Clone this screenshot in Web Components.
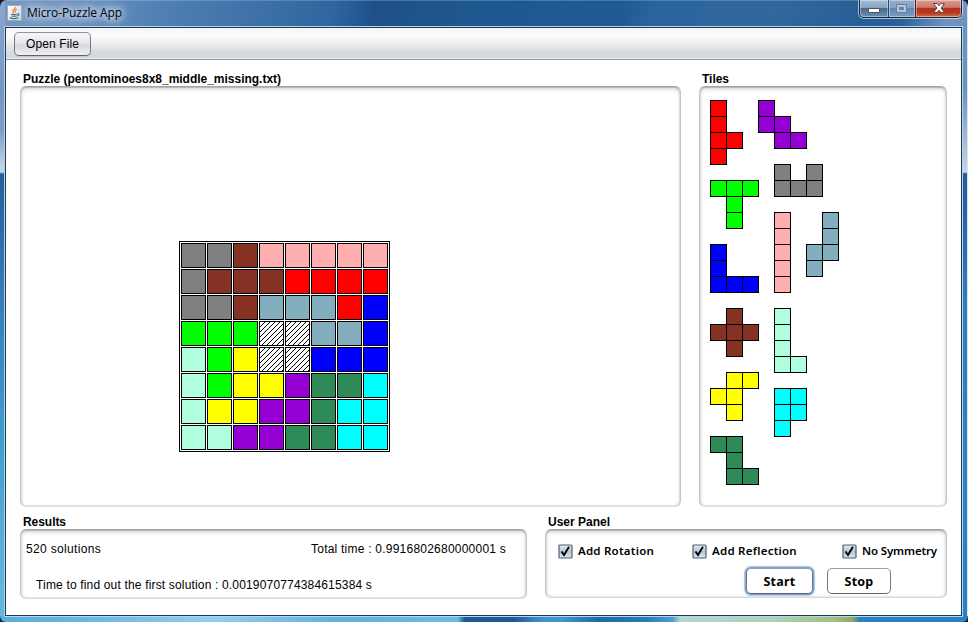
<!DOCTYPE html>
<html lang="en"><head><meta charset="utf-8"><title>Micro-Puzzle App</title>
<style>
html,body{margin:0;height:622px;overflow:hidden;background:#122030}
body{font:12px "Liberation Sans",Arial,sans-serif;color:#000}
.work{display:grid;grid-template-columns:661px 248px;column-gap:18px;padding:10px 0 0 14px;height:453px;box-sizing:border-box}
.lower{display:grid;grid-template-columns:507px 402px;column-gap:18px;padding-left:14px}
.center{display:flex;padding:154px 0 0 158px}
.res{display:flex;flex-direction:column;gap:20px;padding:11px 20px 0 5px}
.res div{display:flex;justify-content:space-between;height:16px;line-height:16px}
.res div+div{padding-left:10px}
.checks{display:grid;grid-template-columns:134px 150px auto;padding:13px 9px 0 12px}
.btns{display:flex;gap:14px;justify-content:flex-end;padding:9px 55px 0 0}
</style></head><body>
<app-window>
  <tool-bar><push-button kind="tool"><fit-text w="53">Open File</fit-text></push-button></tool-bar>
  <div class="work">
    <titled-panel style="--h:421px"><fit-text slot="title" w="258">Puzzle (pentominoes8x8_middle_missing.txt)</fit-text>
      <div class="center"><puzzle-board></puzzle-board></div></titled-panel>
    <titled-panel style="--h:421px"><fit-text slot="title" w="27">Tiles</fit-text><tile-canvas></tile-canvas></titled-panel>
  </div>
  <div class="lower">
    <titled-panel style="--h:70px"><fit-text slot="title" w="43">Results</fit-text>
      <div class="res"><div><fit-text w="75">520 solutions</fit-text><fit-text w="195">Total time : 0.9916802680000001 s</fit-text></div>
      <div><fit-text w="336">Time to find out the first solution : 0.0019070774384615384 s</fit-text></div></div></titled-panel>
    <titled-panel style="--h:69px"><fit-text slot="title" w="62">User Panel</fit-text>
      <div class="checks"><check-box><fit-text w="76">Add Rotation</fit-text></check-box><check-box><fit-text w="85">Add Reflection</fit-text></check-box><check-box><fit-text w="75">No Symmetry</fit-text></check-box></div>
      <div class="btns"><push-button kind="focus"><fit-text w="32">Start</fit-text></push-button><push-button kind="plain"><fit-text w="29">Stop</fit-text></push-button></div></titled-panel>
  </div>
</app-window>
<script>
function define(name, html, setup){
  customElements.define(name, class extends HTMLElement{
    connectedCallback(){
      if(this.shadowRoot) return;
      const t=document.createElement('template'); t.innerHTML=html;
      this.attachShadow({mode:'open'}).append(t.content.cloneNode(true));
      if(setup) setup(this,this.shadowRoot);
    }
  });
}

define('app-window',`<style>
:host{display:grid;position:relative;grid-template-rows:26px 1fr;box-sizing:border-box;width:968px;height:622px;padding:0 6px 5px 4px;border-radius:7px 7px 6px 6px;overflow:hidden;
background:
 linear-gradient(90deg,#56aede,#6cb9e4 10%,#92cdf3 22%,#60b2df 35%,#6bbce6 47.3%,#205796 48%,#205797 53%,#3c94cf 56%,#3e97cf 58%,#196aaa 62%,#2980be 67%,#4b9fd3 69.5%,#b3d7d0 70.3%,#add2b5 80%,#a0c17f 86%,#99a968 88%,#2a80c1 88.8%,#2a80c1) 0 100%/100% 6px no-repeat,
 linear-gradient(#8ba8cc,#7397c3 90px,#7d9dc5 130px,#bed0e2 165px,#c8d7e6 172px,#235f9b 174px,#357db9 300px,#3fa0d0 450px,#65b6df 600px) 0 0/5px 100% no-repeat,
 linear-gradient(90deg,transparent 4px,#d0e6f8 4px) 100% 0/5px 100% no-repeat,
 linear-gradient(#7093bf,#7093bd 90px,#c0d1e3 168px,#c8d7e6 172px,#205d9b 174px,#347ebc 310px,#2d83c4 500px,#2a80c1) 100% 0/6px 100% no-repeat,
 linear-gradient(100deg,#7797bf 0,#6e91bd 7%,#5080b4 15%,#2f669f 31%,#2a619c 32%,#1e5089 35%,#1f5890 45%,#205b96 58%,#2a659e 61%,#32679d 72%,#245d97 82%,#2c629a 84%,#6e92bd 88%,#7496c0);}
.bar{display:flex;align-items:flex-start;justify-content:space-between;box-shadow:inset 0 1px #ffffff30}
.name{display:flex;align-items:center;height:24px;gap:5px;padding-left:3px;font:12px "Open Sans","Noto Sans",sans-serif;text-shadow:0 0 6px #dce8f5,0 0 8px #dce8f5,0 0 12px #c9daed,0 0 14px #c9daed}
.name svg{margin-top:2px}
.ctl{display:flex;width:103px;height:18px;box-sizing:border-box;border:1px solid #17283e;border-top:0;border-radius:0 0 5px 5px;box-shadow:0 0 0 1px #ffffff90;overflow:visible}
.ctl span{display:flex;align-items:center;justify-content:center;box-sizing:border-box;height:17px;box-shadow:inset 0 0 0 1px #ffffff60}
.a{width:28px;background:linear-gradient(#a7bdd4,#87a2c0 45%,#49698f 50%,#6c8fb6);border-radius:0 0 0 4px}
.b{width:27px;background:linear-gradient(#91adcd,#83a2c6 45%,#6387b2 50%,#7b9cc4);border-left:1px solid #2b4668}
.c{width:46px;background:linear-gradient(#dc9e94,#cb7769 43%,#b6301d 50%,#b9371e 75%,#d1704e);border-left:1px solid #501e20;border-radius:0 0 4px 0}
.client{border:1px solid #1b3a59;box-shadow:0 0 0 1px #b9d3e7;background:#fff;margin:1px 0 1px 1px;overflow:hidden}
</style>
<div class="bar"><div class="name"><svg width="15" height="16" viewBox="0 0 15 16"><defs><linearGradient id="g" x2="1" y2="1"><stop stop-color="#fff"/><stop offset="1" stop-color="#cfd5d9"/></linearGradient></defs><rect x=".5" y=".5" width="14" height="15" fill="url(#g)" stroke="#9caabb"/><g fill="none" stroke="#ee7d25" stroke-width="1.2"><path d="M8.5 2C9 4 5 4.600 6 6.500Q7 7.500 6.500 8.500M10 4Q7 5.500 8.500 7.500"/></g><g fill="none" stroke="#3d6d94" stroke-width="1.100"><path d="M4 9.200Q7 10 10 9.200M4.500 11Q7 11.600 9.500 11M2.500 12.800Q7 14.500 11.500 12.800M10.500 8.600Q13 8.500 11.500 10.300L10 11"/></g></svg><fit-text w="95">Micro-Puzzle App</fit-text></div>
<div class="ctl"><span class="a"><svg width="14" height="17"><rect x="1.500" y="8.500" width="11" height="4" rx=".5" fill="#fff" stroke="#4a5361"/></svg></span><span class="b"><svg width="12" height="17"><path d="M.5 4.500h10v8H.5zM3.500 7.500h4v2h-4z" fill="#b2c5da" fill-rule="evenodd" stroke="#6580a1"/></svg></span><span class="c"><svg width="14" height="17"><path d="M1.500 3.500h3.500L7 5.800 9 3.500h3.500L9 8l3.500 4.500H9L7 10.200 5 12.500H1.500L5 8z" fill="#fff" stroke="#57414c"/></svg></span></div></div>
<div class="client"><slot></slot></div>`);

define('tool-bar',`<style>:host{display:flex;box-sizing:border-box;height:32px;padding:4px 0 0 8px;border-bottom:1px solid #92959c;box-shadow:inset 0 -1px #eceef1;background:linear-gradient(#f4f5f7,#fcfcfc 8px,#e9eaed 17px,#d5d8de 25px,#d5d8de)}</style><slot></slot>`);

define('titled-panel',`<style>
:host{display:block;min-width:0}
.t{height:16px;line-height:18px;padding-left:3px;font-weight:bold}
.box{box-sizing:border-box;height:var(--h);border:1px solid #c5c6c6;border-top-color:#a3a5a5;border-bottom-color:#dadada;border-radius:6px;box-shadow:inset 0 1px 1px #b4b4b4,inset 0 2px 4px #d4d4d4,inset 0 0 2px #bbb;background:#fff;overflow:hidden}
</style><div class="t"><slot name="title"></slot></div><div class="box"><slot></slot></div>`);

define('push-button',`<style>
:host{display:flex;box-sizing:border-box;align-items:center;justify-content:center;height:26px;width:64px;border:1px solid #73777f;border-top-color:#989ea7;border-bottom-color:#5e6268;border-radius:5px;background:#fff;font:bold 12.5px "Noto Sans",sans-serif}
:host([kind=tool]){width:77px;height:24px;font:12px "Liberation Sans",sans-serif;background:linear-gradient(#f7f7f8,#e5e6ea 48%,#d5d8df 54%,#e4e6eb 80%,#f0f1f4);border-color:#8d929c #767a82 #5f646c;box-shadow:0 1px #c5c8ce}
:host([kind=focus]){width:67px;box-shadow:0 0 0 1px #7ba6d5,0 0 1px 2px #a8c6e6}
</style><slot></slot>`);

define('check-box',`<style>:host{display:flex;align-items:center;gap:5px;height:16px;font:600 11.5px "Noto Sans",sans-serif}svg{flex:none}slot{display:block;margin-top:-2px}</style>
<svg width="15" height="15" viewBox="0 0 15 15"><defs><linearGradient id="c" x2="0" y2="1"><stop stop-color="#e6edf3"/><stop offset=".5" stop-color="#b5c5d4"/><stop offset="1" stop-color="#d9e8f4"/></linearGradient></defs><rect x="1" y="1" width="13" height="13" rx="1" fill="url(#c)" stroke="#4c6075" stroke-width="1.200"/><path d="M3.500 7.500l2.500 3.500L11 2.800" fill="none" stroke="#000" stroke-width="1.900"/></svg><slot></slot>`);

const COLORS={g:'#808080',b:'#853224',p:'#ffafaf',r:'#ff0000',s:'#83aebe',B:'#0000ff',G:'#00ff00',m:'#afffdf',y:'#ffff00',v:'#9400d3',d:'#2e8b57',c:'#00ffff'};

// Blocked cell: one-pixel rising diagonals.
let hatch='';
for(let y=0;y<23;y++) for(let x=0;x<23;x++) if((x+y)%5===4) hatch+='M'+x+' '+y+'h1v1h-1z';

define('puzzle-board',`<style>:host{display:grid;grid-template-columns:repeat(8,25px);grid-auto-rows:25px;gap:1px;border:1px solid #000;padding:1px}
i{box-sizing:border-box;border:1px solid #000;display:block}svg{display:block}</style>`,(el,root)=>{
  for(const k of 'ggbppppp'+'gbbbrrrr'+'ggbsssrB'+'GGG##ssB'+'mGy##BBB'+'mGyyvddc'+'myyvvdcc'+'mmvvddcc'){
    const c=document.createElement('i');
    if(k==='#') c.innerHTML='<svg width="23" height="23" shape-rendering="crispEdges"><path d="'+hatch+'"/></svg>';
    else c.style.background=COLORS[k];
    root.append(c);
  }
});

define('tile-piece',`<style>:host{display:block;position:absolute}svg{display:block}</style>`,(el,root)=>{
  const rows=el.getAttribute('shape').split('/'), fill=COLORS[el.getAttribute('color')];
  const w=Math.max(...rows.map(r=>r.length))*16+1, h=rows.length*16+1;
  let s='';
  rows.forEach((r,y)=>[...r].forEach((k,x)=>{ if(k==='x') s+='<rect x="'+(x*16+.5)+'" y="'+(y*16+.5)+'" width="16" height="16" fill="'+fill+'" stroke="#000"/>'; }));
  root.innerHTML+='<svg width="'+w+'" height="'+h+'">'+s+'</svg>';
});

define('tile-canvas',`<style>:host{display:block;position:relative;height:100%}</style>`,(el,root)=>{
  for(const [x,y,color,shape] of [[10,13,'r','x/x/xx/x'],[58,13,'v','x/xx/.xx'],[74,77,'g','x.x/xxx'],[10,93,'G','xxx/.x/.x'],[74,125,'p','x/x/x/x/x'],[106,125,'s','.x/.x/xx/x'],[10,157,'B','x/x/xxx'],[10,221,'b','.x/xxx/.x'],[74,221,'m','x/x/x/xx'],[10,285,'y','.xx/xx/.x'],[74,301,'c','xx/xx/x'],[10,349,'d','xx/.x/.xx']]){
    const p=document.createElement('tile-piece');
    p.setAttribute('color',color); p.setAttribute('shape',shape);
    p.style.left=x+'px'; p.style.top=y+'px';
    root.append(p);
  }
});

// Registered last: it measures text in the fonts that the elements above set.
define('fit-text',`<style>:host{display:inline-block;white-space:pre;flex:none}</style><slot></slot>`,el=>{
  const n=el.textContent.length, w=+el.getAttribute('w');
  const range=document.createRange(); range.selectNodeContents(el);
  el.style.letterSpacing=((w-range.getBoundingClientRect().width)/n)+'px';
});
</script>
</body></html>
